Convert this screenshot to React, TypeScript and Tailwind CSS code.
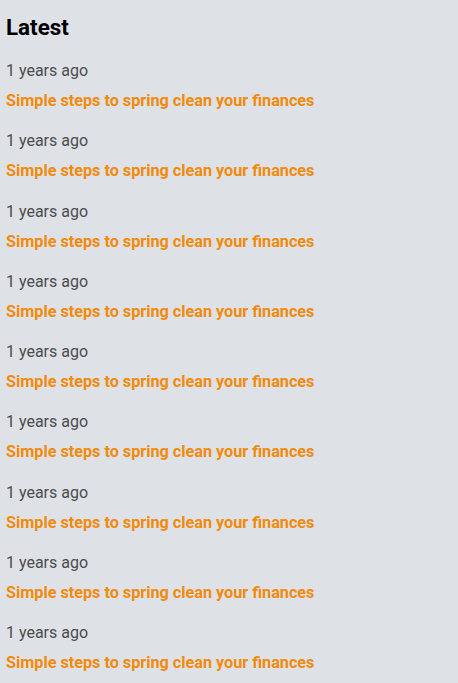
import React from "react";

const items = Array.from({ length: 9 }, () => ({
  date: "1 years ago",
  title: "Simple steps to spring clean your finances",
}));

const App = () => {
  return (
    <div className="min-h-screen w-full bg-[#dee1e6] px-1.5 pt-[13px] font-['Roboto',sans-serif]">
      <h2 className="text-[22.4px] font-bold leading-7 text-black mb-[18px]">Latest</h2>
      <div className="flex flex-col gap-[16.25px]">
        {items.map((item, i) => (
          <div key={i} className="flex flex-col">
            <p className="text-base leading-6 text-[#4d4d4d]">{item.date}</p>
            <a href="#" className="mt-1.5 text-[16.2px] font-bold leading-6 text-[#f28a0c]">
              {item.title}
            </a>
          </div>
        ))}
      </div>
    </div>
  );
};

export default App;
